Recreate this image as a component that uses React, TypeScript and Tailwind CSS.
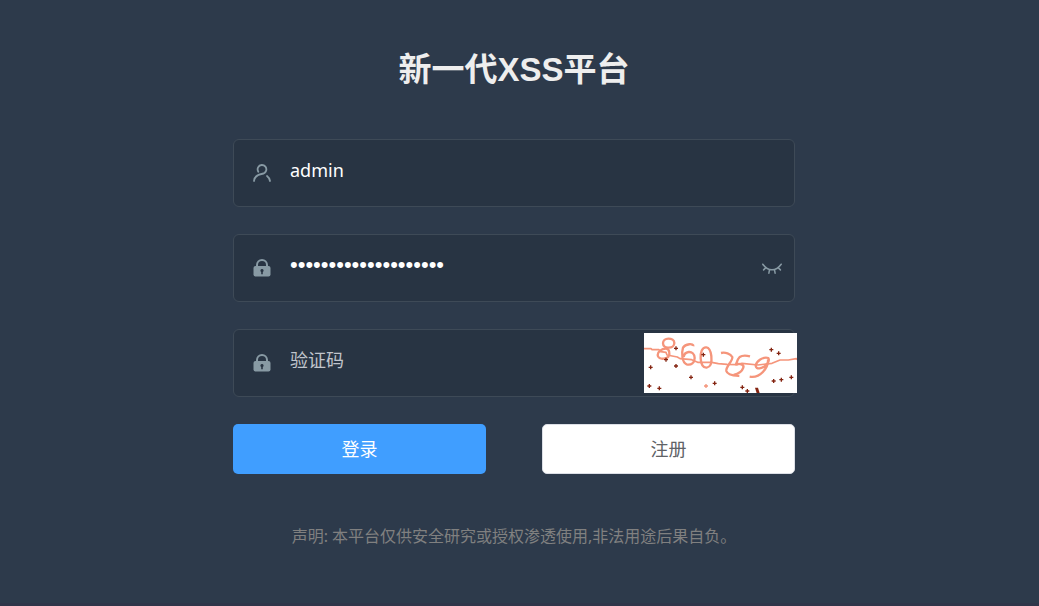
import type { ReactNode } from "react";

function UserIcon() {
  return (
    <svg viewBox="0 0 18 18" className="h-[18px] w-[18px] shrink-0" fill="none" stroke="#889aa4" strokeWidth="1.8" strokeLinecap="round" aria-hidden="true">
      <path d="M5.300 7.700C3.600 4.800 5.300 1.100 8.700 1c3.200-.1 5.200 2.700 4.500 5.400-.6 2.400-2.600 3.200-4.700 3.600C4.200 10.800 1.300 12.800 1 17" />
      <path d="M14 12c1.700 1.300 2.700 2.900 3 5" />
    </svg>
  );
}

function LockIcon() {
  return (
    <svg viewBox="0 0 18 18" className="h-[18px] w-[18px] shrink-0" aria-hidden="true">
      <path d="M4 8V6a5 5 0 0 1 10 0v2" fill="none" stroke="#889aa4" strokeWidth="2" />
      <rect x="0.500" y="7" width="17" height="10.500" rx="2" fill="#889aa4" />
      <path d="M9 10a1.600 1.600 0 0 1 .8 3v2.200H8.200V13A1.600 1.600 0 0 1 9 10z" fill="#283443" />
    </svg>
  );
}

function ClosedEyeIcon() {
  return (
    <svg viewBox="0 0 20 11" className="h-[11px] w-5" fill="none" stroke="#889aa4" strokeWidth="1.500" strokeLinecap="round" aria-hidden="true">
      <path d="M.8 1.200C3.500 4.900 6.500 6.800 10 6.800s6.500-1.900 9.200-5.600M3.900 4.600 1.600 6.900M16.100 4.600l2.300 2.300M7.500 6.600l-.6 3.600M12.500 6.600l.6 3.600" />
    </svg>
  );
}

const specks = [
  [96, 46], [66, 80], [20, 103], [96, 99], [178, 65], [141, 133], [16, 159], [46, 166],
  [212, 151], [295, 163], [310, 174], [382, 50], [404, 61], [389, 144], [412, 140], [442, 133],
];

function Captcha() {
  return (
    <svg viewBox="0 0 459 180" className="h-[60px] w-[153px] bg-white" role="img" aria-label="验证码 860259">
      <g fill="none" stroke="#f5957b" strokeWidth="7" strokeLinejoin="round">
        <path d="M73 17c-9 0-16 6-16 14s7 14 17 13c10 0 17-6 17-14s-8-13-18-13z" />
        <path d="M66 47c-14 0-25 9-25 19 0 9 9 12 18 11 12-1 19-7 17-18-1-9-4-12-10-12z" />
        <path d="M148 40c2-10-24-8-31 4-5 16-3 45 11 50 14 3 24-5 24-19 0-13-9-19-18-18-8 1-14 7-15 15" />
        <path d="M187 43c-13-1-18 15-17 33 1 18 7 29 18 28 12-2 16-17 14-35-2-16-6-25-15-26z" />
        <path d="M231 60c13-3 28 2 34 12 2 12-20 28-18 42 3 13 26 14 39 15" />
        <path d="M318 70c-12-3-25-2-31 2-7 7-8 15-11 22 12-4 25 1 22 10-4 12-16 19-29 22" />
        <path d="M373 75c-16-5-36 10-38 23 1 13 20 9 30-1 8-8 12-15 8-22zM372 79c2 24-23 58-55 52" />
        <path strokeWidth="5" d="M0 47h21l3 3h21l5 6 16 2 3 8 31 6 8 5 35 3 18 8h42l20 4 26 2 30 1 15-4 48 5 42-5 24-10h25l24-4 3 3" />
      </g>
      <g fill="#842411">
        {specks.map(([x, y]) => (
          <path key={`${x}-${y}`} transform={`translate(${x} ${y})`} d="M-2-6h4v4h4v4H2v4h-4V2h-4v-4h4z" />
        ))}
        <path d="M333 164h9l5 16h-9z" />
      </g>
      <path transform="translate(186 159)" fill="#f5957b" d="M-2-6h4v4h4v4H2v4h-4V2h-4v-4h4z" />
    </svg>
  );
}

type FieldProps = {
  label: string;
  icon: ReactNode;
  type?: string;
  value?: string;
  placeholder?: string;
  children?: ReactNode;
};

function Field({ label, icon, type = "text", value, placeholder, children }: FieldProps) {
  return (
    <div className="flex h-[68px] items-center rounded-md border border-[#3e4a57] bg-[#283443] pl-[19px]">
      {icon}
      <input
        type={type}
        aria-label={label}
        defaultValue={value}
        placeholder={placeholder}
        className={`mb-1.5 ml-[19px] h-[58px] min-w-0 flex-1 bg-transparent text-white outline-none placeholder:text-[#c0c4cc] ${
          type === "password" ? "font-['Liberation_Sans',sans-serif] text-[22px]" : "text-lg"
        }`}
      />
      {children}
    </div>
  );
}

export default function App() {
  return (
    <main className="min-h-screen border-b-[3px] border-[#2f3549] bg-[#2d3a4b] pr-[11px] font-['Noto_Sans','Noto_Sans_CJK_SC',sans-serif]">
      <form className="mx-auto flex w-full max-w-[562px] flex-col pt-[46px]" onSubmit={(event) => event.preventDefault()}>
        <h1 className="mb-[45px] text-center font-['Liberation_Sans','Noto_Sans_CJK_SC',sans-serif] text-[33px] leading-[48px] font-bold text-[#eeeeee]">
          新一代XSS平台
        </h1>
        <div className="flex flex-col gap-[27px]">
          <Field label="用户名" icon={<UserIcon />} value="admin" />
          <Field label="密码" icon={<LockIcon />} type="password" value="aaaaaaaaaaaaaaaaaaaa">
            <button type="button" aria-label="显示密码" className="mr-3 flex">
              <ClosedEyeIcon />
            </button>
          </Field>
          <Field label="验证码" icon={<LockIcon />} placeholder="验证码">
            <button type="button" aria-label="刷新验证码" className="-mr-[3px]">
              <Captcha />
            </button>
          </Field>
          <div className="grid grid-cols-2 gap-14 text-lg">
            <button type="submit" className="h-[50px] rounded-[5px] bg-[#409eff] text-white">登录</button>
            <button type="button" className="h-[50px] rounded-[5px] border border-[#dcdfe6] bg-white text-[#606266]">注册</button>
          </div>
        </div>
        <p className="mt-[50px] text-center text-base text-[#808080]">声明: 本平台仅供安全研究或授权渗透使用,非法用途后果自负。</p>
      </form>
    </main>
  );
}
